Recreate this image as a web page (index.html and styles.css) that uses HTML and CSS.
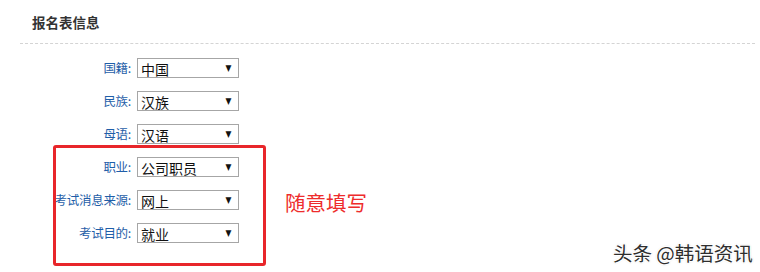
FILE: index.html
```html
<!DOCTYPE html>
<html lang="zh">
<head>
<meta charset="utf-8">
<link rel="stylesheet" href="styles.css">
</head>
<body>
<div class="page">
  <div class="title">报名表信息</div>
  <div class="divider"></div>
  <div class="form">
    <div class="row"><span class="label">国籍:</span><span class="select"><span class="val">中国</span><span class="arrow">▼</span></span></div>
    <div class="row"><span class="label">民族:</span><span class="select"><span class="val">汉族</span><span class="arrow">▼</span></span></div>
    <div class="row"><span class="label">母语:</span><span class="select"><span class="val">汉语</span><span class="arrow">▼</span></span></div>
    <div class="row"><span class="label">职业:</span><span class="select"><span class="val">公司职员</span><span class="arrow">▼</span></span></div>
    <div class="row"><span class="label">考试消息来源:</span><span class="select"><span class="val">网上</span><span class="arrow">▼</span></span></div>
    <div class="row"><span class="label">考试目的:</span><span class="select"><span class="val">就业</span><span class="arrow">▼</span></span></div>
  </div>
  <div class="highlight"></div>
  <div class="note">随意填写</div>
  <div class="watermark">头条 @韩语资讯</div>
</div>
</body>
</html>
```
FILE: styles.css
```css
html, body {
  margin: 0;
  padding: 0;
  background: #ffffff;
}
.page {
  position: relative;
  width: 760px;
  height: 272px;
  overflow: hidden;
  font-family: "Noto Sans CJK SC", "Noto Sans", sans-serif;
}
.title {
  padding: 13px 0 0 32px;
  height: 30px;
  font-size: 13.5px;
  line-height: 18px;
  font-weight: bold;
  color: #333333;
}
.divider {
  margin: 0 5px 0 20px;
  border-top: 1px dashed #d4d4d4;
}
.form {
  padding-top: 7px;
  display: flex;
  flex-direction: column;
}
.row {
  height: 33px;
  display: flex;
  align-items: center;
}
.label {
  width: 131px;
  text-align: right;
  font-size: 12.5px;
  color: #1f5ea8;
  letter-spacing: -0.3px;
}
.select {
  margin-left: 6px;
  height: 18px;
  border: 1px solid #a6a6a6;
  display: flex;
  align-items: center;
  justify-content: space-between;
  padding: 0 6px 0 3px;
  box-sizing: content-box;
  width: 91px;
}
.val {
  font-size: 14px;
  line-height: 18px;
  color: #111111;
  padding-top: 2px;
}
.arrow {
  font-size: 9px;
  color: #111111;
  font-family: "DejaVu Sans", sans-serif;
  transform: scaleX(0.85);
}
.highlight {
  position: absolute;
  left: 53px;
  top: 145px;
  width: 207px;
  height: 115px;
  border: 3px solid #e8262a;
  border-radius: 3px;
}
.note {
  position: absolute;
  left: 285px;
  top: 188px;
  font-size: 20.5px;
  line-height: 28px;
  color: #ee2c2c;
}
.watermark {
  position: absolute;
  left: 613px;
  top: 240px;
  font-size: 19.5px;
  line-height: 26px;
  color: #2e2e2e;
  text-shadow: 1px 1px 0 #ffffff, -1px -1px 0 #ffffff, 1px -1px 0 #ffffff, -1px 1px 0 #ffffff, 0 0 2px #888;
  white-space: nowrap;
}
```
